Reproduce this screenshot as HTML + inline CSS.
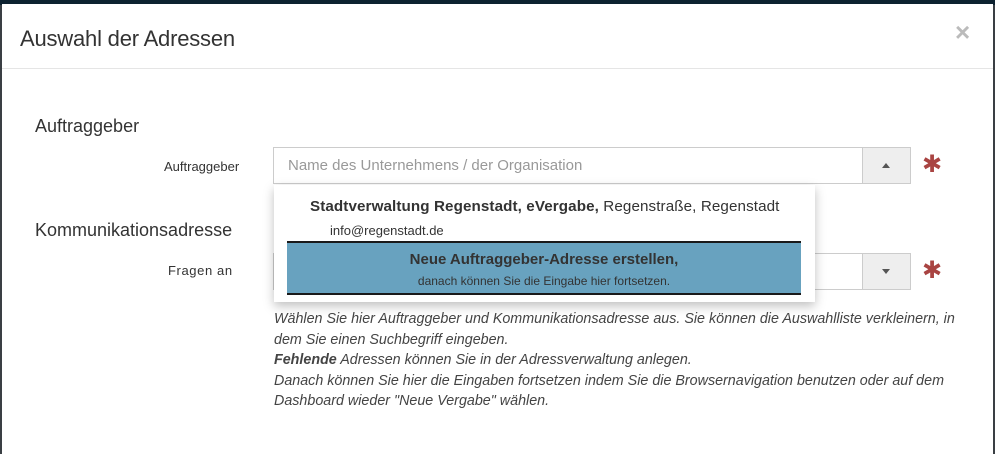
<!DOCTYPE html>
<html><head><style>
body{margin:0;width:995px;height:446px;overflow:hidden;background:#3a3f44;font-family:"Liberation Sans",sans-serif;position:relative}
.top{position:absolute;left:0;top:0;width:995px;height:5px;background:#0d2230}
.modal{position:absolute;left:2px;top:4px;width:991px;height:450px;background:#fff}
.abs{position:absolute}
.inp{position:absolute;border:1px solid #ccc;background:#fff;box-sizing:border-box}
.btn{position:absolute;right:0;top:0;bottom:0;width:47px;background:#eee;border-left:1px solid #ccc}
.star{position:absolute;color:#a94442;font-size:24px;font-family:"DejaVu Sans",sans-serif}
</style></head><body>
<div class="top"></div>
<div class="modal">
<div class="abs" style="left:18px;top:22px;font-size:22px;color:#333;letter-spacing:-0.2px">Auswahl der Adressen</div>
<div class="abs" style="left:953px;top:13px;font-size:26px;color:#bbb;font-weight:bold">×</div>
<div class="abs" style="left:0;top:64px;width:991px;border-top:1px solid #e5e5e5"></div>
<div class="abs" style="left:33px;top:112px;font-size:18px;color:#333">Auftraggeber</div>
<div class="abs" style="left:162px;top:155px;font-size:13px;color:#333">Auftraggeber</div>
<div class="inp" style="left:271px;top:143px;width:638px;height:37px">
<div class="abs" style="left:14px;top:9px;font-size:15px;color:#999">Name des Unternehmens / der Organisation</div>
<div class="btn"><div class="abs" style="left:19px;top:15px;border:4px solid transparent;border-bottom:5px solid #555;border-top:0"></div></div></div>
<div class="star" style="left:920px;top:146px">✱</div>
<div class="abs" style="left:33px;top:216px;font-size:18px;color:#333">Kommunikationsadresse</div>
<div class="abs" style="left:166px;top:259px;font-size:13px;color:#333;letter-spacing:0.6px">Fragen an</div>
<div class="inp" style="left:271px;top:249px;width:638px;height:37px">
<div class="btn"><div class="abs" style="left:19px;top:15px;border:4px solid transparent;border-top:5px solid #555;border-bottom:0"></div></div></div>
<div class="star" style="left:920px;top:252px">✱</div>
<div class="abs" style="left:272px;top:181px;width:541px;height:117px;background:#fff;box-shadow:0 4px 10px rgba(0,0,0,.25)">
<div class="abs" style="left:36px;top:13px;font-size:15.2px;color:#333;white-space:nowrap;letter-spacing:0.1px"><b>Stadtverwaltung Regenstadt, eVergabe,</b> Regenstraße, Regenstadt</div>
<div class="abs" style="left:56px;top:38px;font-size:13px;color:#333">info@regenstadt.de</div>
<div class="abs" style="left:13px;top:56px;width:514px;height:54px;background:#68a2bf;border-top:2px solid #1a1a1a;border-bottom:2px solid #1a1a1a;box-sizing:border-box;text-align:center;color:#333">
<div style="font-size:15px;font-weight:bold;margin-top:8px">Neue Auftraggeber-Adresse erstellen,</div>
<div style="font-size:12px;margin-top:6px">danach können Sie die Eingabe hier fortsetzen.</div></div>
</div>
<div class="abs" style="left:272px;top:305px;width:710px;font-size:14.3px;line-height:20.5px;color:#444;font-style:italic;white-space:nowrap">Wählen Sie hier Auftraggeber und Kommunikationsadresse aus. Sie können die Auswahlliste verkleinern, in<br>dem Sie einen Suchbegriff eingeben.<br><b>Fehlende</b> Adressen können Sie in der Adressverwaltung anlegen.<br>Danach können Sie hier die Eingaben fortsetzen indem Sie die Browsernavigation benutzen oder auf dem<br>Dashboard wieder "Neue Vergabe" wählen.</div>
</div>
</body></html>
